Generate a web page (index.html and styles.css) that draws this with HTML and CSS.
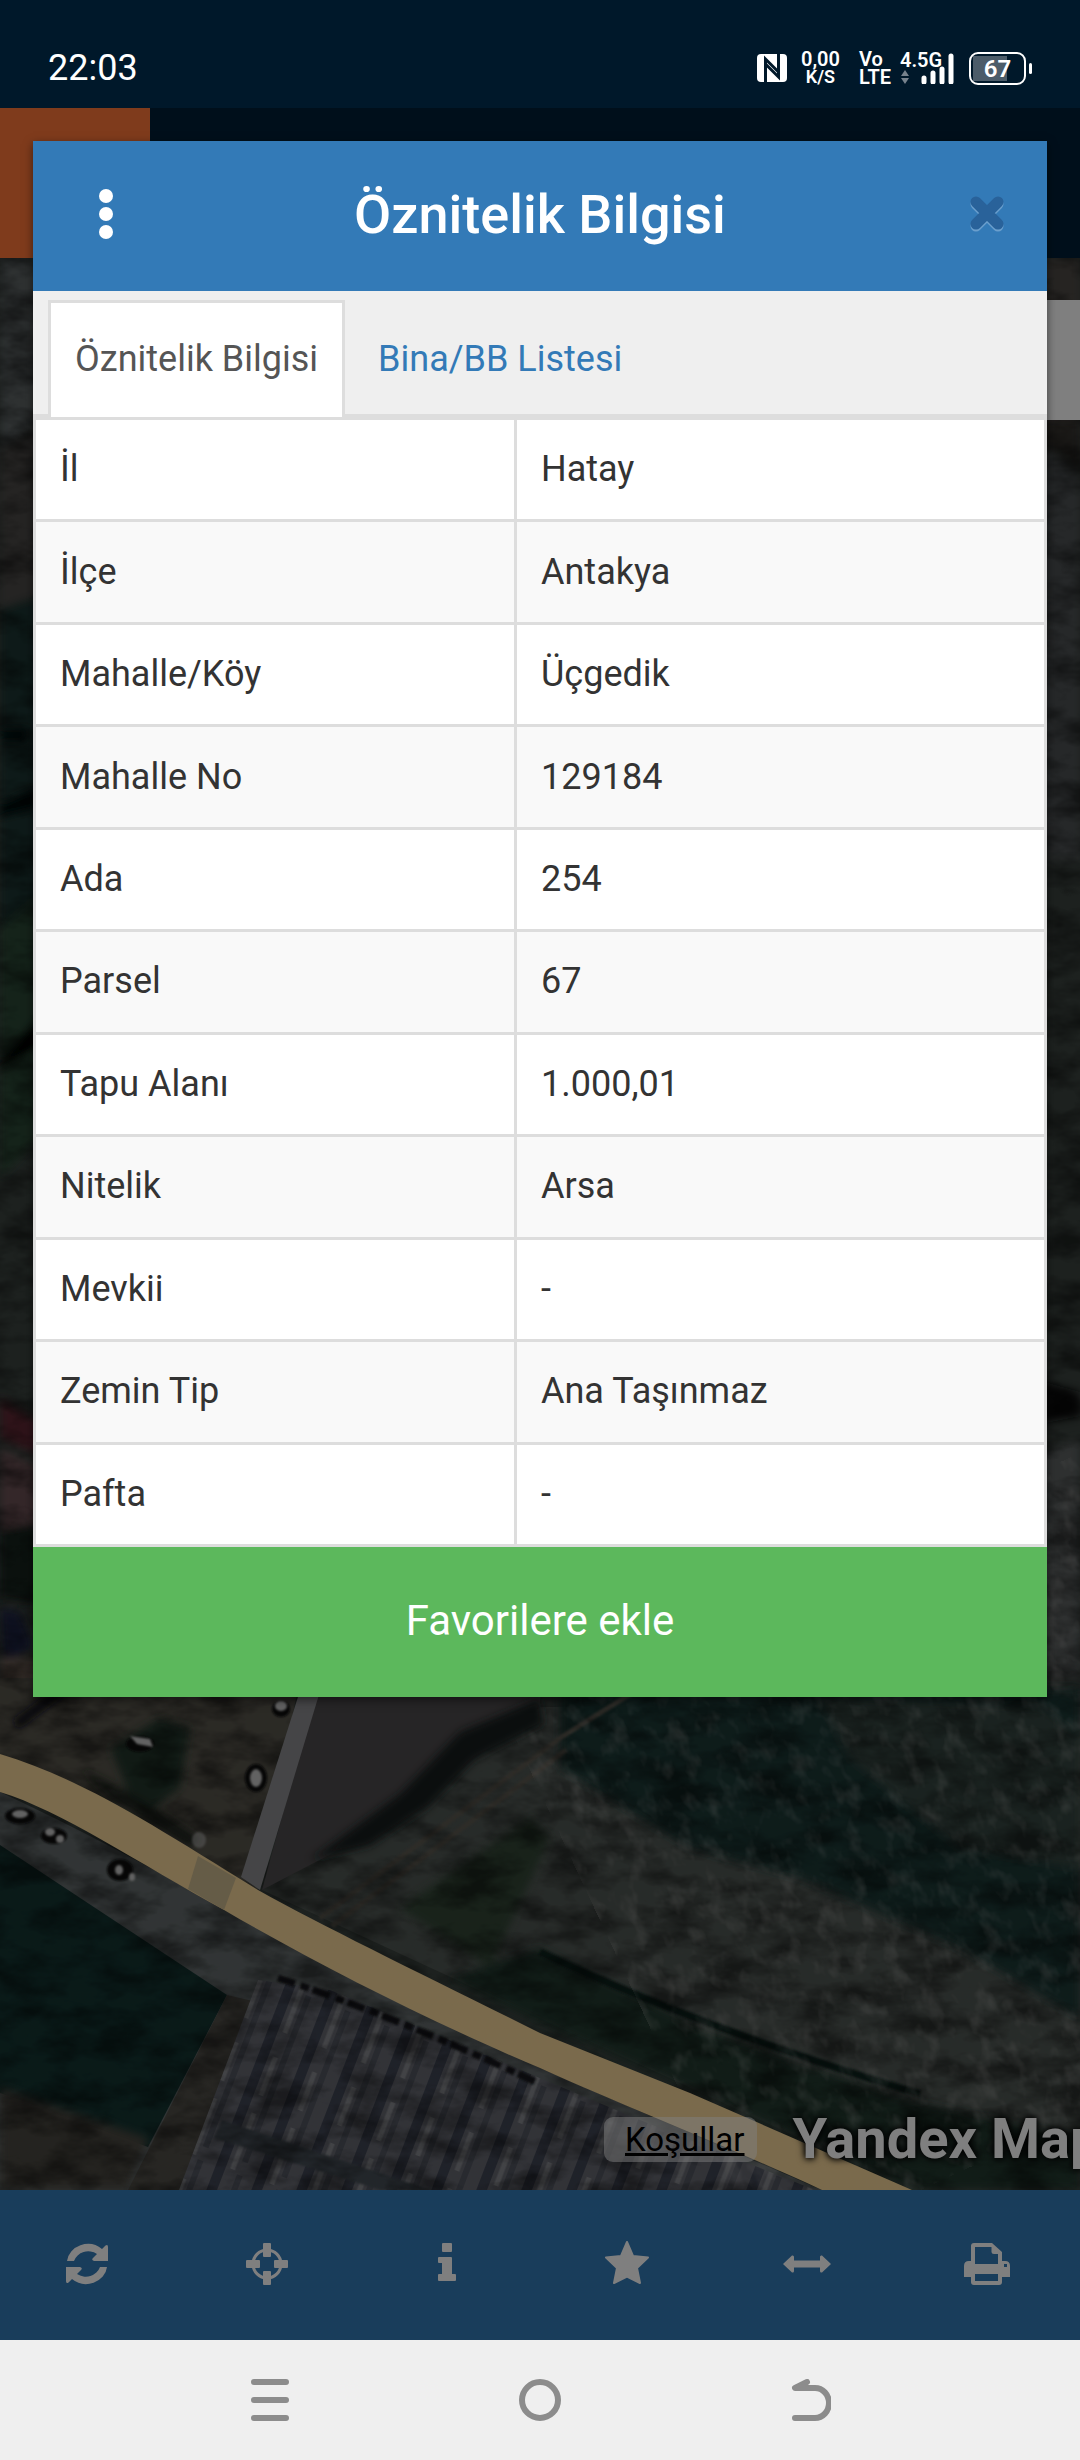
FILE: index.html
```html
<!DOCTYPE html>
<html lang="tr">
<head>
    <meta charset="UTF-8">
    <meta name="viewport" content="width=device-width, initial-scale=1.0">
    <title>Öznitelik Bilgisi</title>
    <link rel="stylesheet" href="styles.css">
</head>
<body>
    <div class="status-bar">
        <span class="clock">22:03</span>
        <div class="status-icons">
            <svg class="nfc" width="30" height="28" viewBox="0 0 30 28">
                <rect width="30" height="28" rx="4" fill="#fff"/>
                <path d="M8.500 28V5l13 13M21.500 0v23l-13-13" fill="none" stroke="#00182a" stroke-width="3"/>
            </svg>
            <div class="stacked speed"><span>0,00</span><small>K/S</small></div>
            <div class="stacked volte"><span>Vo</span><span>LTE</span></div>
            <div class="signal">
                <span>4.5G</span>
                <svg width="54" height="32" viewBox="0 0 54 32">
                    <path d="M1 24l4-6 4 6zM1 26l4 6 4-6z" fill="#77828c"/>
                    <path d="M24 26v4M33 21v9M42 17v13M51 4v26" fill="none" stroke="#fff" stroke-width="5" stroke-linecap="round"/>
                </svg>
            </div>
            <div class="battery"><span>67</span></div>
        </div>
    </div>

    <div class="app">
        <header class="app-header">
            <div class="app-logo"></div>
        </header>

        <main class="map">
            <svg class="map-image" viewBox="0 0 1080 1932" preserveAspectRatio="xMidYMid slice" aria-hidden="true">
                <defs>
                    <filter id="grain" x="0" y="0" width="100%" height="100%">
                        <feTurbulence type="fractalNoise" baseFrequency="0.02 0.04" numOctaves="4" seed="7"/>
                        <feColorMatrix values="0 0 0 0 0  0 0 0 0 0  0 0 0 0 0  2.600 0 0 0 -1"/>
                    </filter>
                    <filter id="light" x="0" y="0" width="100%" height="100%">
                        <feTurbulence type="fractalNoise" baseFrequency="0.06 0.04" numOctaves="3" seed="21"/>
                        <feColorMatrix values="0 0 0 0 .700  0 0 0 0 .680  0 0 0 0 .660  3 0 0 0 -1.500"/>
                    </filter>
                    <filter id="soft"><feGaussianBlur stdDeviation="4"/></filter>
                    <filter id="blur"><feGaussianBlur stdDeviation="1"/></filter>
                    <pattern id="greenhouse" width="42" height="400" patternUnits="userSpaceOnUse" patternTransform="rotate(21)">
                        <rect width="42" height="400" fill="#64666f"/>
                        <path d="M8 0V400" stroke="#3f4452" stroke-width="10"/>
                        <path d="M29 0V400" stroke="#50545e" stroke-width="6" stroke-dasharray="90 14"/>
                        <path d="M20 0V400" stroke="#85878c" stroke-width="5" stroke-dasharray="22 19 60 26"/>
                    </pattern>
                </defs>

                <rect width="1080" height="1932" fill="#3a423e"/>
                <!-- left edge -->
                <g filter="url(#soft)">
                    <path d="M0 0H60V150L0 190Z" fill="#5c6263"/>
                    <path d="M0 190L60 160V330L0 350Z" fill="#4c4a46"/>
                    <path d="M0 350L60 330V640L0 670Z" fill="#1b3431"/>
                    <path d="M0 470h30l-6 14H0zM0 545l36-16v22L0 560z" fill="#050908"/>
                    <path d="M0 670L60 620V860L0 920Z" fill="#2b4635"/>
                    <path d="M0 800l50-55v40L0 812z" fill="#030605"/>
                    <path d="M0 1140l60 36v30L0 1180z" fill="#5c2832"/>
                    <path d="M0 1190l60 30v70L0 1270z" fill="#694f52"/>
                    <path d="M0 1270l60-10v90L0 1340z" fill="#15201f"/>
                    <path d="M0 1350l20 4 14 34-30 20z" fill="#1c2140"/>
                    <path d="M0 1400h60v60H0z" fill="#66594f"/>
                </g>
                <!-- right edge -->
                <g filter="url(#soft)">
                    <path d="M1030 0h50v190h-50z" fill="#4e4a45"/>
                    <path d="M1030 162h50v55q-20-26-50-30z" fill="#36332f"/>
                    <path d="M1030 190q30 4 50 32v380h-50z" fill="#4e5152"/>
                    <path d="M1030 1120l50 14v24l-50 10z" fill="#0a0f0e"/>
                    <path d="M1030 1200l50-20v240h-50z" fill="#5b6161"/>
                </g>

                <!-- fields north of the road -->
                <path d="M0 1420H300L258 1632Q110 1540 0 1496Z" fill="#57544b"/>
                <path d="M262 1632L540 1449H1080V1932H912Z" fill="#4f5652"/>
                <g filter="url(#soft)">
                    <path d="M110 1490l50-30 30 10-10 60-40 30z" fill="#203429"/>
                    <path d="M18 1472l60-44h-20l-46 34z" fill="#0d0f12"/>
                    <path d="M80 1510l60 30 60 40-10 10-80-50z" fill="#1b211b"/>
                    <path d="M560 1430H1080V1760L960 1690 800 1620 690 1590 560 1510Z" fill="#1f3835"/>
                    <path d="M820 1440l220 10 40 30v130l-120-20-110-90z" fill="#354441"/>
                    <path d="M400 1650l130-90 20 20-60 130z" fill="#334436"/>
                    <path d="M540 1690L700 1770 912 1844 1080 1880V1932H912L690 1830 540 1765 450 1720Z" fill="#20382f"/>
                </g>
                <path d="M320 1660L560 1480 640 1430M332 1668L566 1492" fill="none" stroke="#5b5850" stroke-width="5" filter="url(#blur)"/>
                <path d="M540 1694Q700 1770 920 1836" fill="none" stroke="#10201e" stroke-width="7" filter="url(#blur)"/>

                <!-- fields south of the road -->
                <path d="M0 1534Q120 1590 224 1652L540 1810 822 1932H0Z" fill="#62696a"/>
                <path d="M0 1587L227 1737 148 1889 0 1835Z" fill="#143431"/>
                <path d="M0 1829L148 1880 128 1932H0Z" fill="#484640" filter="url(#soft)"/>
                <path d="M227 1737L262 1745 180 1932H128Z" fill="#4e4c46"/>
                <path d="M258 1722L330 1732 640 1862 815 1932H179Z" fill="url(#greenhouse)"/>
                <path d="M222 1862L430 1932H380L214 1880Z" fill="#454d55" filter="url(#blur)"/>
                <path d="M278 1720Q400 1760 540 1826" fill="none" stroke="#16191a" stroke-width="7" stroke-dasharray="18 6 9 4" filter="url(#blur)"/>

                <rect width="1080" height="1932" filter="url(#grain)" opacity="0.450"/>
                <g transform="rotate(-25 900 1500)">
                    <rect x="560" y="1300" width="760" height="600" filter="url(#light)" opacity="0.220"/>
                </g>

                <!-- ploughed plot and its hedge -->
                <path d="M320 1420H540V1449L400 1560 262 1632Z" fill="#4d4a4c"/>
                <path d="M540 1440l-80 34-60 62-90 66 60-14 60-40 44-46 70-36z" fill="#131e1a" filter="url(#soft)"/>

                <!-- roads -->
                <path d="M304 1420H324L260 1632 241 1619Z" fill="#8a8b8f"/>
                <path d="M0 1496C80 1520 150 1565 258 1632C330 1672 430 1720 540 1775L690 1835L912 1932H822C720 1885 640 1855 540 1810C440 1768 320 1708 224 1652C140 1606 60 1552 0 1534Z" fill="#f4d498"/>
                <path d="M198 1598L236 1620 224 1652 188 1631Z" fill="#cbb98f"/>

                <!-- cars -->
                <g fill="#0c0d0e" filter="url(#blur)">
                    <ellipse cx="140" cy="1486" rx="14" ry="8"/>
                    <ellipse cx="256" cy="1520" rx="11" ry="14"/>
                    <ellipse cx="281" cy="1451" rx="9" ry="8"/>
                    <ellipse cx="120" cy="1612" rx="13" ry="11"/>
                    <ellipse cx="20" cy="1558" rx="15" ry="8"/>
                    <ellipse cx="54" cy="1578" rx="13" ry="8"/>
                </g>
                <g fill="#c4c4c4" filter="url(#blur)">
                    <path d="M130 1478l20 3 3 8-16-3z"/>
                    <ellipse cx="256" cy="1520" rx="6" ry="9"/>
                    <ellipse cx="281" cy="1448" rx="6" ry="5"/>
                    <ellipse cx="119" cy="1612" rx="4" ry="5"/>
                    <ellipse cx="132" cy="1619" rx="3" ry="4"/>
                    <ellipse cx="20" cy="1556" rx="8" ry="4"/>
                    <ellipse cx="50" cy="1574" rx="5" ry="4"/>
                    <ellipse cx="60" cy="1581" rx="4" ry="4"/>
                    <ellipse cx="199" cy="1582" rx="7" ry="8" opacity="0.500"/>
                </g>
            </svg>
            <div class="map-panel"></div>
            <div class="map-credits">
                <a class="terms" href="#kosullar">Koşullar</a>
                <span class="brand">Yandex Maps</span>
            </div>
        </main>

        <nav class="toolbar">
            <button type="button" aria-label="Yenile">
                <svg width="42" height="42" viewBox="0 0 42 42">
                    <path id="arc" d="M1 18A21 19 0 0 1 36 6L39.500 2.500Q42 1 42 4V18H28Q25 17 27 15L31 11A15 14 0 0 0 8 18Z"/>
                    <use href="#arc" transform="rotate(180 21 21)"/>
                </svg>
            </button>
            <button type="button" aria-label="Konum">
                <svg width="42" height="42" viewBox="0 0 42 42">
                    <circle cx="21" cy="21" r="14" fill="none" stroke="#fff" stroke-width="3"/>
                    <rect x="17" width="8" height="14" rx="1"/>
                    <rect x="17" y="28" width="8" height="14" rx="1"/>
                    <rect y="17" width="14" height="8" rx="1"/>
                    <rect x="28" y="17" width="14" height="8" rx="1"/>
                </svg>
            </button>
            <button type="button" aria-label="Bilgi">
                <svg width="42" height="42" viewBox="0 0 42 42">
                    <rect x="16" width="10" height="9" rx="1"/>
                    <path d="M13 14H25Q26 14 26 15V31H29Q30 31 30 32V37Q30 38 29 38H13Q12 38 12 37V32Q12 31 13 31H16V20H13Q12 20 12 19V15Q12 14 13 14Z"/>
                </svg>
            </button>
            <button type="button" aria-label="Favoriler">
                <svg width="46" height="46" viewBox="0 0 46 46">
                    <path d="M23 1L29 15 44 16.500 33 27 36 42 23 35.500 10 42 13 27 2 16.500 17 15Z" stroke="#fff" stroke-width="2" stroke-linejoin="round"/>
                </svg>
            </button>
            <button type="button" aria-label="Ölçüm">
                <svg width="48" height="42" viewBox="0 0 48 42">
                    <path d="M0 21L9 12.500Q11 12 11 14V17.500H37V14Q37 12 39 12.500L48 21 39 29.500Q37 30 37 28V24.500H11V28Q11 30 9 29.500Z"/>
                </svg>
            </button>
            <button type="button" aria-label="Yazdır">
                <svg width="46" height="42" viewBox="0 0 46 42">
                    <path fill-rule="evenodd" d="M7 18V3Q7 0 10 0H28L38 9V18H41Q46 18 46 23V34H38V39Q38 42 35 42H10Q7 42 7 39V34H0V23Q0 18 5 18ZM11 4V21H34V11H30Q27.500 11 27.500 9V4ZM11 31V38H34V31ZM40 21h3v3h-3Z"/>
                </svg>
            </button>
        </nav>

        <div class="backdrop"></div>

        <section class="dialog" role="dialog" aria-labelledby="dialog-title">
            <header class="dialog-header">
                <button type="button" class="menu-button" aria-label="Menü">
                    <svg width="14" height="52" viewBox="0 0 14 52" fill="#fff">
                        <circle cx="7" cy="8" r="7"/>
                        <circle cx="7" cy="26" r="7"/>
                        <circle cx="7" cy="44" r="7"/>
                    </svg>
                </button>
                <h1 id="dialog-title">Öznitelik Bilgisi</h1>
                <button type="button" class="close-button" aria-label="Kapat">
                    <svg width="36" height="40" viewBox="0 0 36 40" fill="none" stroke-width="11" stroke-linecap="round">
                        <path d="M7 10L29 32M29 10L7 32" stroke="#6b9fcd"/>
                        <path d="M7 8L29 30M29 8L7 30" stroke="#29629a"/>
                    </svg>
                </button>
            </header>

            <nav class="tabs">
                <a class="tab active" href="#oznitelik">Öznitelik Bilgisi</a>
                <a class="tab" href="#bina">Bina/BB Listesi</a>
            </nav>

            <table class="attributes">
                <tbody>
                    <tr><th scope="row">İl</th><td>Hatay</td></tr>
                    <tr><th scope="row">İlçe</th><td>Antakya</td></tr>
                    <tr><th scope="row">Mahalle/Köy</th><td>Üçgedik</td></tr>
                    <tr><th scope="row">Mahalle No</th><td>129184</td></tr>
                    <tr><th scope="row">Ada</th><td>254</td></tr>
                    <tr><th scope="row">Parsel</th><td>67</td></tr>
                    <tr><th scope="row">Tapu Alanı</th><td>1.000,01</td></tr>
                    <tr><th scope="row">Nitelik</th><td>Arsa</td></tr>
                    <tr><th scope="row">Mevkii</th><td>-</td></tr>
                    <tr><th scope="row">Zemin Tip</th><td>Ana Taşınmaz</td></tr>
                    <tr><th scope="row">Pafta</th><td>-</td></tr>
                </tbody>
            </table>

            <button type="button" class="favorite-button">Favorilere ekle</button>
        </section>
    </div>

    <div class="system-nav">
        <button type="button" aria-label="Son uygulamalar">
            <svg width="42" height="42" viewBox="0 0 42 42"><path d="M5 3H37M5 21H37M5 39H37"/></svg>
        </button>
        <button type="button" aria-label="Ana ekran">
            <svg width="42" height="42" viewBox="0 0 42 42"><circle cx="21" cy="21" r="18"/></svg>
        </button>
        <button type="button" aria-label="Geri">
            <svg width="42" height="42" viewBox="0 0 42 42"><path d="M18 3L6 9H26A14 15 0 0 1 26 39H6"/></svg>
        </button>
    </div>
</body>
</html>
```

FILE: styles.css
```css
* {
    margin: 0;
    padding: 0;
    box-sizing: border-box;
}

body {
    font-family: Roboto, 'Noto Sans', sans-serif;
    font-size: 36px;
    color: #333;
    min-height: 100vh;
    display: flex;
    flex-direction: column;
}

button {
    border: none;
    background: none;
    font-family: inherit;
    cursor: pointer;
}

svg {
    display: block;
}

/* Status bar */
.status-bar {
    display: flex;
    justify-content: space-between;
    align-items: center;
    height: 108px;
    padding: 28px 48px 0;
    background: #00182a;
    color: #fff;
}

.status-icons {
    display: flex;
    align-items: center;
    font-weight: 600;
}

.stacked {
    display: flex;
    flex-direction: column;
    font-size: 20px;
    line-height: 18px;
}

.stacked small {
    font-size: 18px;
}

.speed {
    align-items: center;
    margin-left: 14px;
}

.volte {
    margin-left: 19px;
}

.signal {
    position: relative;
    margin: 0 15px 0 9px;
    font-size: 20px;
}

.signal span {
    position: absolute;
    top: -2px;
    left: 0;
    line-height: 20px;
}

.battery {
    position: relative;
    width: 57px;
    height: 33px;
    margin-right: 6px;
    border: 2px solid #fff;
    border-radius: 9px;
    background: linear-gradient(#4c5c69, #4c5c69) 2px 2px / 34px 25px no-repeat;
    font-size: 24px;
    line-height: 30px;
    text-align: center;
}

.battery::after {
    content: '';
    position: absolute;
    top: 9px;
    right: -8px;
    width: 3px;
    height: 11px;
    border-radius: 2px;
    background: #fff;
}

/* App */
.app {
    position: relative;
    flex: 1;
    display: flex;
    flex-direction: column;
}

.app-header {
    height: 150px;
    background: #001e36;
}

.app-logo {
    width: 150px;
    height: 150px;
    background: #fe7638;
}

.map {
    position: relative;
    flex: 1;
    overflow: hidden;
    display: flex;
    flex-direction: column;
    justify-content: space-between;
}

.map-image {
    position: absolute;
    top: 0;
    left: 0;
    width: 100%;
    height: 100%;
}

.map-panel {
    position: relative;
    align-self: flex-end;
    width: 120px;
    height: 120px;
    margin-top: 42px;
    background: #fff;
}

.map-credits {
    position: relative;
    display: flex;
    align-items: center;
    align-self: flex-end;
    gap: 36px;
    width: 476px;
    margin-bottom: 18px;
    white-space: nowrap;
}

.terms {
    padding: 0 12px 0 21px;
    border-radius: 9px;
    background: rgba(255, 255, 255, 0.5);
    color: #000;
    font-size: 33px;
    line-height: 45px;
}

.brand {
    color: #fff;
    font-size: 56px;
    font-weight: 700;
    line-height: 66px;
    text-shadow: 0 0 9px #000, 0 0 6px #000;
}

.toolbar {
    display: grid;
    grid-template-columns: repeat(6, 1fr);
    height: 150px;
    background: #337ab7;
}

.toolbar button {
    display: flex;
    align-items: center;
    justify-content: center;
    padding: 0 6px 2px 0;
    fill: #fff;
}

.backdrop {
    position: absolute;
    top: 0;
    right: 0;
    bottom: 0;
    left: 0;
    background: rgba(0, 0, 0, 0.5);
}

/* Dialog */
.dialog {
    position: absolute;
    top: 33px;
    left: 33px;
    right: 33px;
    background: #fff;
    box-shadow: 0 3px 9px rgba(0, 0, 0, 0.5);
}

.dialog-header {
    display: grid;
    grid-template-columns: 150px 1fr 150px;
    align-items: center;
    height: 150px;
    padding-bottom: 4px;
    background: #337ab7;
    color: #fff;
}

.dialog-header h1 {
    font-size: 54px;
    font-weight: 500;
    text-align: center;
}

.menu-button {
    padding-left: 66px;
}

.close-button {
    justify-self: end;
    padding-right: 42px;
}

.tabs {
    display: flex;
    gap: 6px;
    padding: 9px 15px 0;
    background: #efefef;
    border-bottom: 3px solid #ddd;
}

.tab {
    margin-bottom: -3px;
    padding: 0 24px 2px;
    border: 3px solid transparent;
    border-bottom: none;
    color: #337ab7;
    line-height: 112px;
    text-decoration: none;
}

.tab.active {
    border-color: #ddd;
    background: #fff;
    color: #555;
}

.attributes {
    width: 100%;
    height: 1130px;
    border-collapse: collapse;
    table-layout: fixed;
}

.attributes th,
.attributes td {
    padding: 0 24px 1px;
    border: 3px solid #ddd;
    font-weight: 400;
    text-align: left;
}

.attributes th {
    width: 481px;
}

.attributes tr:nth-child(even) {
    background: #f9f9f9;
}

.favorite-button {
    display: block;
    width: 100%;
    height: 150px;
    padding-bottom: 3px;
    background: #5cb85c;
    color: #fff;
    font-size: 42px;
}

/* System navigation */
.system-nav {
    display: grid;
    grid-template-columns: repeat(3, 1fr);
    height: 120px;
    padding: 0 12.5%;
    background: #efefef;
}

.system-nav button {
    display: flex;
    align-items: center;
    justify-content: center;
}

.system-nav svg {
    fill: none;
    stroke: #8c8c8c;
    stroke-width: 6;
    stroke-linecap: round;
    stroke-linejoin: round;
}
```
